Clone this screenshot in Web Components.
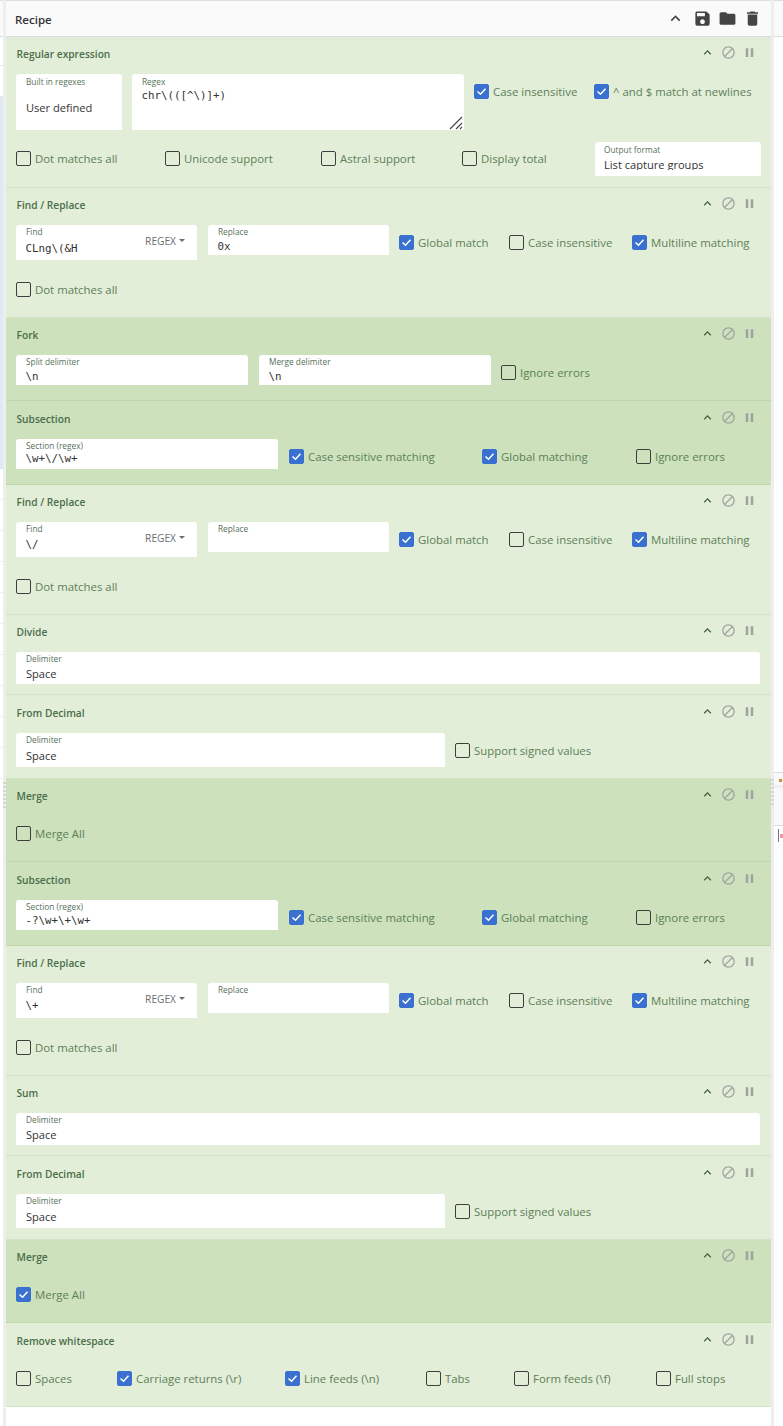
<!DOCTYPE html>
<html>
<head>
<meta charset="utf-8">
<style>
  html, body { margin: 0; height: 1426px; overflow: hidden; background: #fff; }
  body { font-family: "Open Sans", "Liberation Sans", sans-serif; }
</style>
</head>
<body>
<app-shell>
  <left-strip slot="left"></left-strip>
  <right-strip slot="right"></right-strip>

  <op-card title="Regular expression" style="height:151px">
    <op-row>
      <op-field label="Built in regexes" value="User defined" gap="12" style="width:106px;height:56px;margin-right:10px;--label-top:1px"></op-field>
      <op-field label="Regex" value="chr\(([^\)]+)" mono gap="1" style="width:332px;height:56px;margin-right:10px;--label-top:1px">
        <svg slot="corner" width="14" height="14" viewBox="0 0 14 14"><path d="M1 13L13 1M7 13l6-6M11 13l2-2" stroke="#444" stroke-width="1.1" fill="none"/></svg>
      </op-field>
      <op-check label="Case insensitive" checked style="width:120px"></op-check>
      <op-check label="^ and $ match at newlines" checked></op-check>
    </op-row>
    <op-row style="margin-top:12px">
      <op-check label="Dot matches all" style="width:149px;--check-top:9px"></op-check>
      <op-check label="Unicode support" style="width:156px;--check-top:9px"></op-check>
      <op-check label="Astral support" style="width:141px;--check-top:9px"></op-check>
      <op-check label="Display total" style="width:133px;--check-top:9px"></op-check>
      <op-field label="Output format" value="List capture groups" gap="1" style="width:166px;height:34px;--label-top:1px;--pad-left:9px;--value-h:14px"></op-field>
    </op-row>
  </op-card>

  <op-card title="Find / Replace" style="height:130px">
    <op-row>
      <op-field label="Find" value="CLng\(&amp;H" mono gap="4" style="width:181px;height:35px;margin-right:11px"><regex-drop></regex-drop></op-field>
      <op-field label="Replace" value="0x" mono gap="2" style="width:181px;height:30px;margin-right:10px"></op-field>
      <op-check label="Global match" checked style="width:110px"></op-check>
      <op-check label="Case insensitive" style="width:123px"></op-check>
      <op-check label="Multiline matching" checked></op-check>
    </op-row>
    <op-row style="margin-top:22px">
      <op-check label="Dot matches all" style="--check-top:0px"></op-check>
    </op-row>
  </op-card>

  <op-card title="Fork" dark style="height:83px">
    <op-row>
      <op-field label="Split delimiter" value="\n" mono gap="2" style="width:232px;height:30px;margin-right:11px"></op-field>
      <op-field label="Merge delimiter" value="\n" mono gap="2" style="width:232px;height:30px;margin-right:10px"></op-field>
      <op-check label="Ignore errors"></op-check>
    </op-row>
  </op-card>

  <op-card title="Subsection" dark head="38" style="height:84px">
    <op-row>
      <op-field label="Section (regex)" value="\w+\/\w+" mono gap="0" style="width:262px;height:30px;margin-right:11px"></op-field>
      <op-check label="Case sensitive matching" checked style="width:193px"></op-check>
      <op-check label="Global matching" checked style="width:154px"></op-check>
      <op-check label="Ignore errors"></op-check>
    </op-row>
  </op-card>

  <op-card title="Find / Replace" style="height:130px">
    <op-row>
      <op-field label="Find" value="\/" mono gap="3" style="width:181px;height:35px;margin-right:11px"><regex-drop></regex-drop></op-field>
      <op-field label="Replace" value="" mono gap="2" style="width:181px;height:30px;margin-right:10px"></op-field>
      <op-check label="Global match" checked style="width:110px"></op-check>
      <op-check label="Case insensitive" style="width:123px"></op-check>
      <op-check label="Multiline matching" checked></op-check>
    </op-row>
    <op-row style="margin-top:22px">
      <op-check label="Dot matches all" style="--check-top:0px"></op-check>
    </op-row>
  </op-card>

  <op-card title="Divide" style="height:80px">
    <op-row>
      <op-field label="Delimiter" value="Space" gap="1" style="width:744px;height:32px"></op-field>
    </op-row>
  </op-card>

  <op-card title="From Decimal" head="38" style="height:84px">
    <op-row>
      <op-field label="Delimiter" value="Space" gap="2" style="width:429px;height:34px;margin-right:10px"></op-field>
      <op-check label="Support signed values"></op-check>
    </op-row>
  </op-card>

  <op-card title="Merge" dark style="height:83px">
    <op-row>
      <op-check label="Merge All"></op-check>
    </op-row>
  </op-card>

  <op-card title="Subsection" dark head="38" style="height:84px">
    <op-row>
      <op-field label="Section (regex)" value="-?\w+\+\w+" mono gap="1" style="width:262px;height:30px;margin-right:11px"></op-field>
      <op-check label="Case sensitive matching" checked style="width:193px"></op-check>
      <op-check label="Global matching" checked style="width:154px"></op-check>
      <op-check label="Ignore errors"></op-check>
    </op-row>
  </op-card>

  <op-card title="Find / Replace" style="height:130px">
    <op-row>
      <op-field label="Find" value="\+" mono gap="3" style="width:181px;height:35px;margin-right:11px"><regex-drop></regex-drop></op-field>
      <op-field label="Replace" value="" mono gap="2" style="width:181px;height:30px;margin-right:10px"></op-field>
      <op-check label="Global match" checked style="width:110px"></op-check>
      <op-check label="Case insensitive" style="width:123px"></op-check>
      <op-check label="Multiline matching" checked></op-check>
    </op-row>
    <op-row style="margin-top:22px">
      <op-check label="Dot matches all" style="--check-top:0px"></op-check>
    </op-row>
  </op-card>

  <op-card title="Sum" style="height:80px">
    <op-row>
      <op-field label="Delimiter" value="Space" gap="1" style="width:744px;height:32px"></op-field>
    </op-row>
  </op-card>

  <op-card title="From Decimal" head="38" style="height:84px">
    <op-row>
      <op-field label="Delimiter" value="Space" gap="2" style="width:429px;height:34px;margin-right:10px"></op-field>
      <op-check label="Support signed values"></op-check>
    </op-row>
  </op-card>

  <op-card title="Merge" dark style="height:83px">
    <op-row>
      <op-check label="Merge All" checked></op-check>
    </op-row>
  </op-card>

  <op-card title="Remove whitespace" head="38" style="height:84px">
    <op-row>
      <op-check label="Spaces" style="width:101px"></op-check>
      <op-check label="Carriage returns (\r)" checked style="width:168px"></op-check>
      <op-check label="Line feeds (\n)" checked style="width:141px"></op-check>
      <op-check label="Tabs" style="width:88px"></op-check>
      <op-check label="Form feeds (\f)" style="width:142px"></op-check>
      <op-check label="Full stops"></op-check>
    </op-row>
  </op-card>
</app-shell>

<script>
const ICONS = {
    up: 'M7.41 15.41L12 10.83l4.59 4.58L18 14l-6-6-6 6z',
    save: 'M17 3H5c-1.11 0-2 .9-2 2v14c0 1.1.89 2 2 2h14c1.1 0 2-.9 2-2V7l-4-4zm-5 16c-1.66 0-3-1.34-3-3s1.34-3 3-3 3 1.34 3 3-1.34 3-3 3zm3-10H5V5h10v4z',
    folder: 'M10 4H4c-1.1 0-1.99.9-1.99 2L2 18c0 1.1.9 2 2 2h16c1.1 0 2-.9 2-2V8c0-1.1-.9-2-2-2h-8l-2-2z',
    trash: 'M6 19c0 1.1.9 2 2 2h8c1.1 0 2-.9 2-2V7H6v12zM19 4h-3.5l-1-1h-5l-1 1H5v2h14V4z',
    ban: 'M12 2C6.48 2 2 6.48 2 12s4.48 10 10 10 10-4.48 10-10S17.52 2 12 2zM4 12c0-4.42 3.58-8 8-8 1.85 0 3.55.63 4.9 1.69L5.69 16.9C4.63 15.55 4 13.85 4 12zm8 8c-1.85 0-3.55-.63-4.9-1.69L18.31 7.1C19.37 8.45 20 10.15 20 12c0 4.42-3.58 8-8 8z',
    pause: 'M6 19h4V5H6v14zm8-14v14h4V5h-4z'
};

function icon(name, size, color) {
    return `<svg width="${size}" height="${size}" viewBox="0 0 24 24"><path fill="${color}" d="${ICONS[name]}"/></svg>`;
}

class AppShell extends HTMLElement {
    constructor() {
        super();
        this.attachShadow({ mode: 'open' });
        this.shadowRoot.innerHTML = `
            <style>
                :host {
                    display: grid;
                    grid-template-columns: 3px 3px 765px 3px 9px;
                    height: 1426px;
                }
                .gutter { background: #eeeeee; display: flex; flex-direction: column; }
                .grip {
                    height: 26px;
                    background: repeating-linear-gradient(#d6d6d6 0 2px, #eeeeee 2px 4px);
                }
                .panel { background: #fff; border-top: 1px solid #ddd; }
                header {
                    box-sizing: border-box;
                    background: #fafafa;
                    border-bottom: 1px solid #ddd;
                    height: 36px;
                    display: flex;
                    align-items: center;
                    padding: 0 9px 0 9px;
                    font-size: 11.5px;
                    font-weight: 600;
                    color: #333;
                }
                header span { flex: 1; padding-top: 1px; }
                header svg { display: block; margin-left: 6px; }
                header svg.up { margin-right: 2px; }
            </style>
            <slot name="left"></slot>
            <div class="gutter"><div class="grip" style="margin-top:782px"></div></div>
            <div class="panel">
                <header>
                    <span>Recipe</span>
                    <svg class="up" width="19" height="19" viewBox="0 0 24 24"><path fill="#444" d="${ICONS.up}"/></svg>
                    ${icon('save', 19, '#444')}
                    ${icon('folder', 19, '#444')}
                    ${icon('trash', 19, '#444')}
                </header>
                <slot></slot>
            </div>
            <div class="gutter"><div class="grip" style="margin-top:779px"></div></div>
            <slot name="right"></slot>
        `;
    }
}

class LeftStrip extends HTMLElement {
    constructor() {
        super();
        this.attachShadow({ mode: 'open' });
        this.shadowRoot.innerHTML = `
            <style>
                :host { display: flex; flex-direction: column; background: #fff; height: 1426px; }
                .top { background: #fafafa; border-top: 1px solid #ddd; border-bottom: 1px solid #ddd; box-sizing: border-box; height: 37px; }
                .row { height: 28px; border-bottom: 1px solid #e6e6e6; }
                .row2 { height: 30px; border-bottom: 1px solid #e6e6e6; }
                .blue {
                    height: 372px;
                    background: repeating-linear-gradient(#deebf6 0 30px, #d3ebf2 30px 31px);
                }
                .plain {
                    height: 310px;
                    background: repeating-linear-gradient(#ffffff 0 30px, #eeeeee 30px 31px);
                }
            </style>
            <div class="top"></div>
            <div class="row"></div>
            <div class="row2"></div>
            <div class="blue"></div>
            <div class="plain"></div>
        `;
    }
}

class RightStrip extends HTMLElement {
    constructor() {
        super();
        this.attachShadow({ mode: 'open' });
        this.shadowRoot.innerHTML = `
            <style>
                :host { display: flex; flex-direction: column; background: #fff; height: 1426px; }
                .top { height: 37px; box-sizing: border-box; background: #fafafa; border-top: 1px solid #ddd; border-bottom: 1px solid #ddd; }
                .gap { height: 735px; }
                .tab { height: 54px; box-sizing: border-box; background: #f9f9f9; border-top: 1px solid #ddd; border-bottom: 1px solid #ddd; padding: 6px 0 0 5px; }
                .glyph { width: 3px; height: 3px; background: #c98a3c; }
                .band { height: 3px; background: #eeeeee; margin: 3px 0 0 -5px; }
                .line { display: flex; align-items: center; gap: 1px; margin: 3px 0 0 4px; }
                .caret { width: 1px; height: 13px; background: #777; }
                .mark { width: 3px; height: 4px; background: #ee9aa8; }
            </style>
            <div class="top"></div>
            <div class="gap"></div>
            <div class="tab"><div class="glyph"></div><div class="band"></div></div>
            <div class="line"><div class="caret"></div><div class="mark"></div></div>
        `;
    }
}

class OpCard extends HTMLElement {
    constructor() {
        super();
        this.attachShadow({ mode: 'open' });
    }

    connectedCallback() {
        const dark = this.hasAttribute('dark');
        const head = Number(this.getAttribute('head') || 37);
        const shift = head - 37;
        this.shadowRoot.innerHTML = `
            <style>
                :host {
                    display: block;
                    box-sizing: border-box;
                    background: ${dark ? '#cde1bd' : '#e3eed9'};
                    border-bottom: 1px solid ${dark ? '#bfd8aa' : '#d4e5c6'};
                    padding: 0 10px;
                }
                .head { height: ${head}px; display: flex; }
                .title {
                    flex: 1;
                    font-size: 10.2px;
                    font-weight: 600;
                    line-height: 14px;
                    margin: ${10 + shift}px 0 0 0.5px;
                    color: #4a6e4a;
                }
                .icons { display: flex; gap: 6px; margin: ${7.5 + shift}px 4px 0 0; height: 15px; }
                svg { display: block; }
            </style>
            <div class="head">
                <div class="title">${this.getAttribute('title')}</div>
                <div class="icons">
                    ${icon('up', 15, '#3f5f45')}
                    ${icon('ban', 15, '#9ea39e')}
                    ${icon('pause', 15, '#9ea39e')}
                </div>
            </div>
            <slot></slot>
        `;
    }
}

class OpRow extends HTMLElement {
    constructor() {
        super();
        this.attachShadow({ mode: 'open' });
        this.shadowRoot.innerHTML = `
            <style>:host { display: flex; align-items: flex-start; }</style>
            <slot></slot>
        `;
    }
}

class OpField extends HTMLElement {
    constructor() {
        super();
        this.attachShadow({ mode: 'open' });
    }

    connectedCallback() {
        const mono = this.hasAttribute('mono');
        const gap = this.getAttribute('gap') || 0;
        this.shadowRoot.innerHTML = `
            <style>
                :host {
                    display: flex;
                    align-items: center;
                    flex: none;
                    box-sizing: border-box;
                    background: #fff;
                    border-radius: 3px 3px 0 0;
                    overflow: hidden;
                    padding: calc(2px + var(--label-top, 0px)) 12px 0 var(--pad-left, 10px);
                    position: relative;
                }
                .main { flex: 1; align-self: flex-start; min-width: 0; }
                .label { font-size: 8.3px; line-height: 10px; color: #56705a; white-space: nowrap; }
                .value {
                    margin-top: ${gap}px;
                    margin-left: ${mono ? '-0.5px' : '0'};
                    color: #333;
                    white-space: pre;
                    height: var(--value-h, auto);
                    overflow: hidden;
                    font: ${mono ? '10.8px/16px "DejaVu Sans Mono", monospace' : '11.1px/18px "Open Sans", sans-serif'};
                }
                .corner { position: absolute; right: 1px; bottom: 0; line-height: 0; }
            </style>
            <div class="main">
                <div class="label">${this.getAttribute('label')}</div>
                <div class="value">${this.getAttribute('value').replace(/&/g, '&amp;')}</div>
            </div>
            <slot></slot>
            <div class="corner"><slot name="corner"></slot></div>
        `;
    }
}

class RegexDrop extends HTMLElement {
    constructor() {
        super();
        this.attachShadow({ mode: 'open' });
        this.shadowRoot.innerHTML = `
            <style>
                :host { display: flex; align-items: center; gap: 3px; font-size: 10.2px; color: #6a6f73; margin-top: -6px; }
                i { width: 0; height: 0; border: 3px solid transparent; border-top-color: #6a6f73; border-bottom: 0; }
            </style>
            <span>REGEX</span><i></i>
        `;
    }
}

class OpCheck extends HTMLElement {
    constructor() {
        super();
        this.attachShadow({ mode: 'open' });
    }

    connectedCallback() {
        const checked = this.hasAttribute('checked');
        this.shadowRoot.innerHTML = `
            <style>
                :host {
                    display: flex;
                    align-items: center;
                    flex: none;
                    gap: 4px;
                    height: 15px;
                    margin-top: var(--check-top, 10px);
                    font-size: 11.4px;
                    color: #5c8058;
                    white-space: nowrap;
                }
                .box {
                    width: 15px;
                    height: 15px;
                    box-sizing: border-box;
                    border-radius: 2px;
                    flex: none;
                    border: 1px solid ${checked ? '#3a70d0' : '#3c3f3c'};
                    background: ${checked ? '#3a70d0' : 'transparent'};
                }
                svg { display: block; margin: -1px; }
            </style>
            <div class="box">${checked ? '<svg width="15" height="15" viewBox="0 0 15 15"><path d="M3.5 7.5l3 2.8 5-5.6" stroke="#fff" stroke-width="1.5" fill="none"/></svg>' : ''}</div>
            <span>${this.getAttribute('label')}</span>
        `;
    }
}

customElements.define('app-shell', AppShell);
customElements.define('left-strip', LeftStrip);
customElements.define('right-strip', RightStrip);
customElements.define('op-card', OpCard);
customElements.define('op-row', OpRow);
customElements.define('op-field', OpField);
customElements.define('regex-drop', RegexDrop);
customElements.define('op-check', OpCheck);
</script>
</body>
</html>
